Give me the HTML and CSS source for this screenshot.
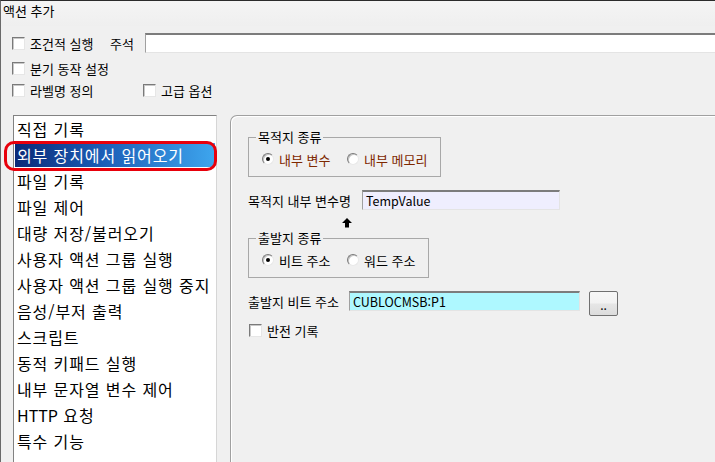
FILE: index.html
```html
<!DOCTYPE html>
<html lang="ko">
<head>
<meta charset="utf-8">
<title>액션 추가</title>
<link rel="stylesheet" href="styles.css">
</head>
<body>
<div class="window">
  <div class="titlebar">액션 추가</div>
  <div class="options">
    <div class="row row1">
      <span class="check"></span><span class="clabel cw1">조건적 실행</span>
      <span class="memo-label">주석</span>
      <span class="field memo"></span>
    </div>
    <div class="row row2">
      <span class="check"></span><span class="clabel">분기 동작 설정</span>
    </div>
    <div class="row row3">
      <span class="check"></span><span class="clabel cw3">라벨명 정의</span>
      <span class="check"></span><span class="clabel">고급 옵션</span>
    </div>
  </div>
  <div class="main">
    <ul class="list">
      <li>직접 기록</li>
      <li class="selected"><span>외부 장치에서 읽어오기</span></li>
      <li>파일 기록</li>
      <li>파일 제어</li>
      <li>대량 저장/불러오기</li>
      <li>사용자 액션 그룹 실행</li>
      <li>사용자 액션 그룹 실행 중지</li>
      <li>음성/부저 출력</li>
      <li>스크립트</li>
      <li>동적 키패드 실행</li>
      <li>내부 문자열 변수 제어</li>
      <li><span class="latin">HTTP</span> 요청</li>
      <li>특수 기능</li>
    </ul>
    <div class="panel">
      <fieldset class="group g1">
        <legend>목적지 종류</legend>
        <div class="radios">
          <span class="radio on"></span><span class="rlabel fixed brown">내부 변수</span>
          <span class="radio"></span><span class="rlabel brown">내부 메모리</span>
        </div>
      </fieldset>
      <div class="frow f1">
        <span class="flabel w1">목적지 내부 변수명</span>
        <span class="field lav">TempValue</span>
      </div>
      <div class="arrow-row">
        <svg width="10" height="10" viewBox="0 0 10 10"><path d="M5 0 L10 5 L7 5 L7 9.5 L3 9.5 L3 5 L0 5 Z" fill="#000"/></svg>
      </div>
      <fieldset class="group g2">
        <legend>출발지 종류</legend>
        <div class="radios">
          <span class="radio on"></span><span class="rlabel fixed">비트 주소</span>
          <span class="radio"></span><span class="rlabel">워드 주소</span>
        </div>
      </fieldset>
      <div class="frow f2">
        <span class="flabel w2">출발지 비트 주소</span>
        <span class="field cyan">CUBLOCMSB:P1</span>
        <span class="btn">..</span>
      </div>
      <div class="row invert">
        <span class="check"></span><span class="clabel">반전 기록</span>
      </div>
    </div>
  </div>
  <div class="highlight"></div>
</div>
</body>
</html>
```
FILE: styles.css
```css
* { box-sizing: border-box; }
html, body { margin: 0; padding: 0; background: #f0f0f0; }
.window {
  position: relative;
  width: 715px;
  height: 462px;
  overflow: hidden;
  background: #f0f0f0;
  border-top: 1px solid #2b2b2b;
  border-left: 1px solid #6a6a6a;
  font-family: "Noto Sans CJK KR", "Noto Sans", sans-serif;
  font-size: 13px;
  color: #000;
}
.titlebar {
  height: 25px;
  padding-left: 2px;
  padding-bottom: 6px;
  display: flex;
  align-items: center;
  background: linear-gradient(#f4f4f4, #efefef);
  line-height: 15px;
}
.options { display: flex; flex-direction: column; }
.row { display: flex; align-items: center; line-height: 15px; }
.row1 { height: 20px; margin-top: 7px; }
.row2 { height: 21px; margin-top: 5px; }
.row3 { height: 22px; }
.check {
  width: 13px; height: 13px;
  flex: none;
  background: #fff;
  border: 1px solid;
  border-color: #7a7a7a #e6e6e6 #e6e6e6 #7a7a7a;
  box-shadow: inset 1px 1px 0 #c8c8c8;
}
.options .row > .check:first-child { margin-left: 11px; }
.clabel { margin-left: 5px; white-space: nowrap; }
.cw1 { width: 80px; flex: none; }
.cw3 { width: 113px; flex: none; }
.memo-label { width: 35px; flex: none; white-space: nowrap; }
.field {
  display: flex;
  align-items: center;
  height: 20px;
  padding-left: 3px;
  background: #fff;
  border-style: solid;
  border-width: 2px 1px 1px 1px;
  border-color: #7c7c7c #e4e4e4 #e4e4e4 #a0a0a0;
  white-space: nowrap;
  font-size: 12.5px;
  line-height: 14px;
}
.memo { flex: 1; margin-right: -10px; }
.main {
  display: flex;
  align-items: flex-start;
  margin-top: 14px;
  padding-left: 12px;
}
.list {
  list-style: none;
  margin: 0;
  padding: 0;
  width: 204px;
  height: 360px;
  flex: none;
  background: #fff;
  border: 1px solid;
  border-color: #828282 #d6d6d6 #d6d6d6 #828282;
  font-size: 16px;
  letter-spacing: 0.9px;
}
.list .latin { letter-spacing: 0; }
.list li {
  height: 26px;
  line-height: 26px;
  padding-left: 3px;
  white-space: nowrap;
  overflow: hidden;
}
.list li.selected { padding: 1px 1px; }
.list li.selected span {
  display: block;
  height: 24px;
  line-height: 24px;
  padding-left: 2px;
  color: #fff;
  background: linear-gradient(to right, #0a2a78 0%, #1c5fb8 45%, #3ea6ee 100%);
}
.panel {
  flex: 1;
  height: 360px;
  margin-left: 13px;
  margin-right: -8px;
  border-top: 1px solid #a0a0a0;
  border-left: 1px solid #a0a0a0;
  border-top-left-radius: 7px;
  box-shadow: inset 1px 1px 0 #ffffff;
  padding: 14px 0 0 17px;
  display: flex;
  flex-direction: column;
  align-items: flex-start;
}
.group {
  margin: 0;
  padding: 7px 0 9px 7px;
  border: 1px solid #a8a8a8;
  min-inline-size: 0;
}
.group legend {
  padding: 0 2px;
  line-height: 14px;
  font-size: 13px;
}
.g1 { width: 193px; }
.g2 { width: 181px; margin-top: 3px; }
.radios {
  display: flex;
  align-items: center;
  height: 16px;
  line-height: 15px;
  padding-left: 6px;
}
.radio {
  width: 12px; height: 12px;
  flex: none;
  border-radius: 50%;
  background: #fff;
  border: 1px solid;
  border-color: #7a7a7a #e8e8e8 #e8e8e8 #7a7a7a;
  box-shadow: inset 1px 1px 0 #c4c4c4;
  display: flex;
  align-items: center;
  justify-content: center;
}
.radio.on::after {
  content: "";
  width: 4px; height: 4px;
  border-radius: 50%;
  background: #000;
}
.rlabel { margin-left: 5px; white-space: nowrap; }
.rlabel.fixed { width: 68px; flex: none; }
.brown { color: #7e2800; }
.frow { display: flex; align-items: flex-start; line-height: 15px; }
.f1 { margin-top: 13px; }
.f2 { margin-top: 13px; }
.flabel { height: 20px; display: flex; align-items: center; white-space: nowrap; flex: none; }
.w1 { width: 114px; }
.w2 { width: 101px; }
.lav { width: 198px; background: #efeefe; }
.cyan { width: 231px; background: #aef8ff; }
.arrow-row { margin-top: 8px; padding-left: 94px; height: 10px; display: flex; }
.btn {
  width: 29px;
  height: 25px;
  margin-left: 9px;
  border: 1px solid #707070;
  border-radius: 2px;
  background: linear-gradient(#f7f7f7 0%, #f2f2f2 48%, #e6e6e6 52%, #dcdcdc 100%);
  display: flex;
  align-items: center;
  justify-content: center;
  font-size: 12px;
  line-height: 14px;
  padding-top: 2px;
}
.invert { margin-top: 7px; height: 14px; padding-left: 1px; }
.highlight {
  position: absolute;
  left: 3px;
  top: 140px;
  width: 213px;
  height: 30px;
  border: 3px solid #e8000b;
  border-radius: 10px;
  pointer-events: none;
}
```
